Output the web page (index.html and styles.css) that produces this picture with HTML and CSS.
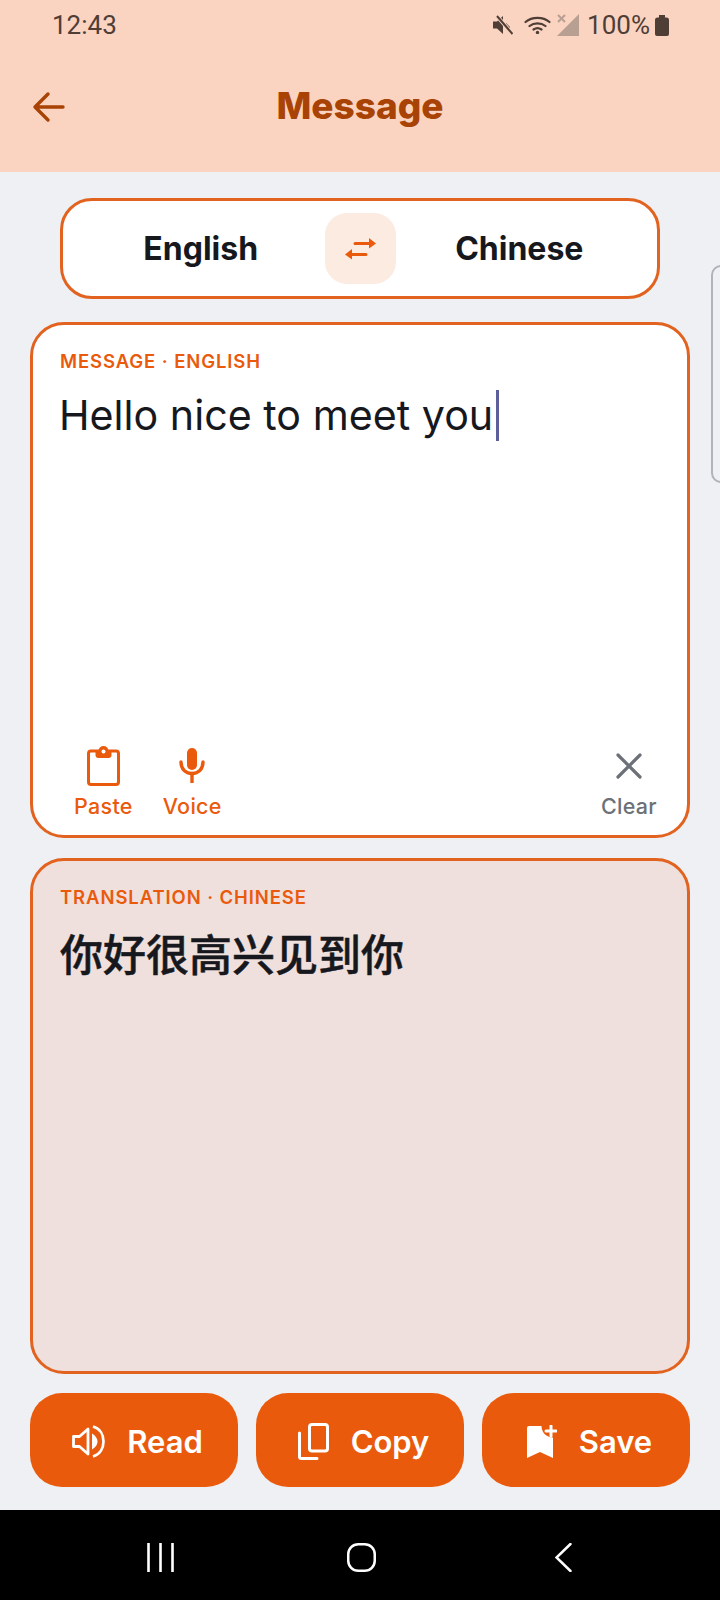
FILE: index.html
```html
<!DOCTYPE html>
<html>
<head>
    <title>Message</title>
    <link rel="stylesheet" href="styles.css">
</head>
<body>
    <div class="screen">
        <div class="header">
            <div class="status-bar">
                <span class="clock">12:43</span>
                <div class="status-icons">
                    <svg class="ic-mute" viewBox="0 0 20 20" width="20" height="20"><path d="M0 6.500h4L10 1v18l-6-5.500H0z" fill="#4e3e36"/><path d="M13 8l4 4-1 3-3-3z" fill="#4e3e36"/><path d="M3 0l17 19.500" stroke="#fbd3c1" stroke-width="4"/><path d="M4 1l15.500 18" stroke="#4e3e36" stroke-width="2"/></svg>
                    <svg class="ic-wifi" viewBox="0 0 27 18" width="27" height="18"><path d="M1.500 6C8 .5 19 .5 25.500 6M5.500 10c4.500-3.500 11.500-3.500 16 0M9.500 13.500c2.500-1.700 5.500-1.700 8 0" stroke="#4e3e36" stroke-width="2.200" fill="none" stroke-linecap="round"/><circle cx="13.500" cy="16.500" r="1.700" fill="#4e3e36"/></svg>
                    <svg class="ic-signal" viewBox="0 0 22 22" width="22" height="22"><path d="M0 22L22 0v22z" fill="#b79f92"/><path d="M1 1l7 7M8 1L1 8" stroke="#b79f92" stroke-width="2"/></svg>
                    <span class="battery-text">100%</span>
                    <svg class="ic-battery" viewBox="0 0 14 21" width="14" height="21"><path d="M4 2.500V0h6v2.500h1.500A2.500 2.500 0 0 1 14 5v14a2 2 0 0 1-2 2H2a2 2 0 0 1-2-2V5a2.500 2.500 0 0 1 2.500-2.500z" fill="#4e3e36"/></svg>
                </div>
            </div>
            <div class="title-row">
                <svg class="back-icon" viewBox="0 0 34 32" width="34" height="32"><path d="M31 16H3M16 3L3 16l13 13" stroke="#a84305" stroke-width="3.400" fill="none" stroke-linecap="round" stroke-linejoin="round"/></svg>
                <h1>Message</h1>
            </div>
        </div>

        <div class="content">
            <div class="lang-box">
                <span class="lang-name">English</span>
                <div class="swap-btn">
                    <svg viewBox="0 0 31 22" width="31" height="22"><path d="M10 5.500h15M21 16.500H6" stroke="#ea5a0c" stroke-width="3" stroke-linecap="round"/><path d="M24 0l7 5.500-7 5z" fill="#ea5a0c"/><path d="M7 11l-7 5.500 7 5z" fill="#ea5a0c"/></svg>
                </div>
                <span class="lang-name">Chinese</span>
            </div>

            <div class="card card-input">
                <div class="card-label">MESSAGE · ENGLISH</div>
                <div class="message-text">Hello nice to meet you<span class="caret"></span></div>
                <div class="card-actions">
                    <div class="action">
                        <svg viewBox="0 0 33 40" width="33" height="40"><rect x="1.500" y="5" width="30" height="33.500" rx="2.500" fill="none" stroke="#ea5a0c" stroke-width="3"/><path d="M8.500 4h16v5a3 3 0 0 1-3 3h-10a3 3 0 0 1-3-3z" fill="#ea5a0c"/><circle cx="16.500" cy="5" r="5" fill="#ea5a0c"/><circle cx="16.500" cy="5.500" r="2" fill="#fff"/></svg>
                        <span>Paste</span>
                    </div>
                    <div class="action">
                        <svg viewBox="0 0 26 36" width="26" height="36"><rect x="8" y="0" width="10" height="22" rx="5" fill="#ea5a0c"/><path d="M2 14c0 7 4.500 11.500 11 11.500S24 21 24 14" fill="none" stroke="#ea5a0c" stroke-width="3.400" stroke-linecap="round"/><path d="M13 25v10" stroke="#ea5a0c" stroke-width="3.400"/></svg>
                        <span>Voice</span>
                    </div>
                    <div class="action action-clear">
                        <svg viewBox="0 0 26 26" width="26" height="26"><path d="M2 2l22 22M24 2L2 24" stroke="#6c7178" stroke-width="3.200" stroke-linecap="round"/></svg>
                        <span>Clear</span>
                    </div>
                </div>
            </div>

            <div class="card card-output">
                <div class="card-label">TRANSLATION · CHINESE</div>
                <div class="translation-text">你好很高兴见到你</div>
            </div>

            <div class="btn-row">
                <button class="btn">
                    <svg viewBox="0 0 33 33" width="33" height="33"><path d="M1.500 11.500h6L16 4v25l-8.500-7.500h-6z" fill="none" stroke="#fff" stroke-width="2.800" stroke-linejoin="round"/><path d="M20 8.500c3.500 2 5.500 5 5.500 8s-2 6-5.500 8z" fill="#fff"/><path d="M21 1.500c7 2 10.500 8 10.500 15s-3.500 13-10.500 15" fill="none" stroke="#fff" stroke-width="2.700"/></svg>
                    Read
                </button>
                <button class="btn">
                    <svg viewBox="0 0 31 37" width="31" height="37"><rect x="11.500" y="1.500" width="18" height="26.500" rx="2.500" fill="none" stroke="#fff" stroke-width="3"/><path d="M1.500 10v23.500a2 2 0 0 0 2 2H19" fill="none" stroke="#fff" stroke-width="3" stroke-linecap="round"/></svg>
                    Copy
                </button>
                <button class="btn">
                    <svg viewBox="0 0 30 33" width="30" height="33"><path d="M0 3a2 2 0 0 1 2-2h12.500c0 6.500 5 11.500 11.500 11.500V33l-13-6-13 6z" fill="#fff"/><path d="M24 1v10M19 6h10" stroke="#fff" stroke-width="3" stroke-linecap="round"/></svg>
                    Save
                </button>
            </div>
        </div>

        <div class="nav-bar">
            <svg viewBox="0 0 27 29" width="27" height="29"><path d="M1.500 0v29M13.500 0v29M25.500 0v29" stroke="#fff" stroke-width="2.600"/></svg>
            <svg class="nav-home" viewBox="0 0 29 29" width="29" height="29"><rect x="1.250" y="1.250" width="26.500" height="26.500" rx="10" fill="none" stroke="#fff" stroke-width="2.500"/></svg>
            <svg viewBox="0 0 17 29" width="17" height="29"><path d="M15.500 1L1.500 14.500l14 13.500" fill="none" stroke="#fff" stroke-width="2.500" stroke-linecap="round"/></svg>
        </div>

        <div class="edge-handle"></div>
    </div>
</body>
</html>
```

FILE: styles.css
```css
* {
  box-sizing: border-box;
}

body {
  margin: 0;
  font-family: 'Inter', 'Noto Sans CJK SC', sans-serif;
  background-color: #eef0f4;
}

.screen {
  position: relative;
  width: 720px;
  height: 1600px;
  overflow: hidden;
  display: flex;
  flex-direction: column;
}

.header {
  height: 172px;
  background-color: #fbd3c1;
  flex-shrink: 0;
}

.status-bar {
  height: 50px;
  padding: 0 51px 0 52px;
  display: flex;
  align-items: center;
  justify-content: space-between;
  color: #4e3e36;
  font-family: 'Roboto', sans-serif;
  font-size: 26px;
}

.status-icons {
  display: flex;
  align-items: center;
}

.ic-wifi {
  margin-left: 11px;
}

.ic-signal {
  margin-left: 6px;
}

.battery-text {
  margin-left: 8px;
}

.ic-battery {
  margin-left: 5px;
}

.title-row {
  height: 70px;
  margin-top: 22px;
  padding-left: 32px;
  display: flex;
  align-items: center;
}

.title-row h1 {
  flex: 1;
  margin: 0;
  padding: 0 66px 4px 0;
  text-align: center;
  color: #a84305;
  font-size: 37px;
  font-weight: 800;
}

.content {
  flex: 1;
  padding: 26px 30px 23px;
  display: flex;
  flex-direction: column;
  align-items: center;
  gap: 20px;
}

.lang-box {
  width: 600px;
  height: 101px;
  flex-shrink: 0;
  margin-bottom: 3px;
  padding: 0 14px;
  background-color: #fff;
  border: 3px solid #e2621f;
  border-radius: 32px;
  display: flex;
  align-items: center;
}

.lang-name {
  flex: 1;
  text-align: center;
  color: #16181d;
  font-size: 32px;
  font-weight: 700;
}

.swap-btn {
  width: 71px;
  height: 71px;
  border-radius: 22px;
  background-color: #fcebe0;
  display: flex;
  align-items: center;
  justify-content: center;
}

.card {
  width: 100%;
  height: 516px;
  flex-shrink: 0;
  padding: 25px 27px 0;
  border: 3px solid #e2621f;
  border-radius: 34px;
  display: flex;
  flex-direction: column;
}

.card-input {
  background-color: #fff;
}

.card-output {
  background-color: #efe0dd;
}

.card-label {
  color: #ea5a0c;
  font-size: 18.500px;
  font-weight: 600;
  letter-spacing: 0.9px;
}

.message-text {
  margin: 14px 0 0 -1px;
  color: #16181d;
  font-size: 41.200px;
  height: 58px;
  line-height: 58px;
}

.caret {
  display: inline-block;
  width: 3px;
  height: 51px;
  margin: 0 0 6px 3px;
  vertical-align: middle;
  background-color: #5c5f9a;
}

.card-actions {
  margin-top: auto;
  padding: 0 3px 16px 14px;
  display: flex;
  gap: 30px;
}

.action {
  display: flex;
  flex-direction: column;
  align-items: center;
  gap: 7px;
  color: #ea5a0c;
  font-size: 21.500px;
  font-weight: 500;
  letter-spacing: 0.3px;
}

.action svg {
  height: 40px;
}

.action-clear {
  margin-left: auto;
  color: #6c7178;
}

.translation-text {
  margin-top: 13px;
  color: #16181d;
  font-size: 43px;
  font-weight: 500;
  -webkit-text-stroke: 0.5px #16181d;
}

.btn-row {
  width: 100%;
  display: flex;
  gap: 18px;
  margin-top: -1px;
}

.btn {
  flex: 1;
  height: 94px;
  padding: 2px 0 0 7px;
  border: 0;
  border-radius: 32px;
  background-color: #ea5a0c;
  color: #fff;
  font-family: inherit;
  font-size: 31px;
  font-weight: 600;
  display: flex;
  align-items: center;
  justify-content: center;
  gap: 22px;
}

.nav-bar {
  height: 90px;
  flex-shrink: 0;
  padding: 5px 148px 0 147px;
  background-color: #000;
  display: flex;
  align-items: center;
  justify-content: space-between;
}

.nav-home {
  margin-right: 6px;
}

.edge-handle {
  position: absolute;
  top: 265px;
  right: -15px;
  width: 24px;
  height: 218px;
  border: 2px solid #b0b3ba;
  border-radius: 10px;
}
```
